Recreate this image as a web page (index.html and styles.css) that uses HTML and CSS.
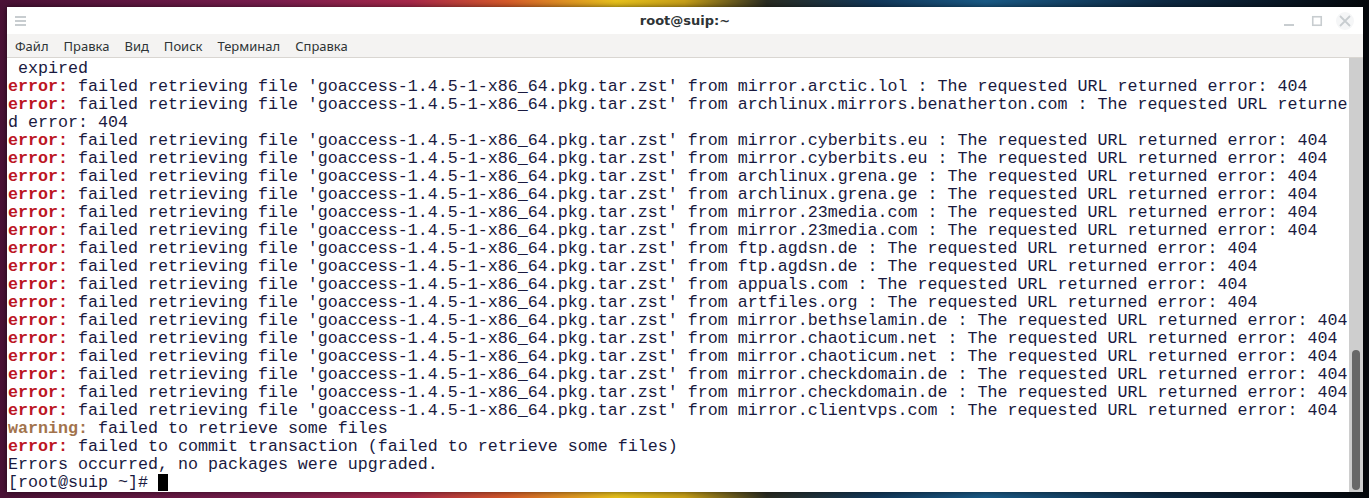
FILE: index.html
```html
<!DOCTYPE html>
<html lang="ru">
<head>
    <meta charset="UTF-8">
    <meta name="viewport" content="width=device-width, initial-scale=1.0">
    <title>root@suip:~</title>
    <link rel="stylesheet" href="styles.css">
</head>
<body>
    <div class="window">
        <div class="titlebar">
            <div class="burger"><span></span><span></span><span></span></div>
            <div class="title">root@suip:~</div>
            <div class="controls">
                <svg width="12" height="12" viewBox="0 0 12 12"><rect x="1" y="9" width="10" height="2" fill="#c8cdd0"/></svg>
                <svg width="12" height="12" viewBox="0 0 12 12"><rect x="1.75" y="1.75" width="8.5" height="8.5" fill="none" stroke="#c8cdd0" stroke-width="1.6"/></svg>
                <span class="close"><svg width="12" height="12" viewBox="0 0 12 12"><path d="M1 1 L11 11 M11 1 L1 11" stroke="#c8cdd0" stroke-width="1.8"/></svg></span>
            </div>
        </div>
        <div class="menubar">
            <span>Файл</span>
            <span>Правка</span>
            <span>Вид</span>
            <span>Поиск</span>
            <span>Терминал</span>
            <span>Справка</span>
        </div>
        <div class="terminal">
            <div class="screen">
                <div class="ln"> expired</div>
                <div class="ln"><b class="err">error:</b> failed retrieving file 'goaccess-1.4.5-1-x86_64.pkg.tar.zst' from mirror.arctic.lol : The requested URL returned error: 404</div>
                <div class="ln"><b class="err">error:</b> failed retrieving file 'goaccess-1.4.5-1-x86_64.pkg.tar.zst' from archlinux.mirrors.benatherton.com : The requested URL returne</div>
                <div class="ln">d error: 404</div>
                <div class="ln"><b class="err">error:</b> failed retrieving file 'goaccess-1.4.5-1-x86_64.pkg.tar.zst' from mirror.cyberbits.eu : The requested URL returned error: 404</div>
                <div class="ln"><b class="err">error:</b> failed retrieving file 'goaccess-1.4.5-1-x86_64.pkg.tar.zst' from mirror.cyberbits.eu : The requested URL returned error: 404</div>
                <div class="ln"><b class="err">error:</b> failed retrieving file 'goaccess-1.4.5-1-x86_64.pkg.tar.zst' from archlinux.grena.ge : The requested URL returned error: 404</div>
                <div class="ln"><b class="err">error:</b> failed retrieving file 'goaccess-1.4.5-1-x86_64.pkg.tar.zst' from archlinux.grena.ge : The requested URL returned error: 404</div>
                <div class="ln"><b class="err">error:</b> failed retrieving file 'goaccess-1.4.5-1-x86_64.pkg.tar.zst' from mirror.23media.com : The requested URL returned error: 404</div>
                <div class="ln"><b class="err">error:</b> failed retrieving file 'goaccess-1.4.5-1-x86_64.pkg.tar.zst' from mirror.23media.com : The requested URL returned error: 404</div>
                <div class="ln"><b class="err">error:</b> failed retrieving file 'goaccess-1.4.5-1-x86_64.pkg.tar.zst' from ftp.agdsn.de : The requested URL returned error: 404</div>
                <div class="ln"><b class="err">error:</b> failed retrieving file 'goaccess-1.4.5-1-x86_64.pkg.tar.zst' from ftp.agdsn.de : The requested URL returned error: 404</div>
                <div class="ln"><b class="err">error:</b> failed retrieving file 'goaccess-1.4.5-1-x86_64.pkg.tar.zst' from appuals.com : The requested URL returned error: 404</div>
                <div class="ln"><b class="err">error:</b> failed retrieving file 'goaccess-1.4.5-1-x86_64.pkg.tar.zst' from artfiles.org : The requested URL returned error: 404</div>
                <div class="ln"><b class="err">error:</b> failed retrieving file 'goaccess-1.4.5-1-x86_64.pkg.tar.zst' from mirror.bethselamin.de : The requested URL returned error: 404</div>
                <div class="ln"><b class="err">error:</b> failed retrieving file 'goaccess-1.4.5-1-x86_64.pkg.tar.zst' from mirror.chaoticum.net : The requested URL returned error: 404</div>
                <div class="ln"><b class="err">error:</b> failed retrieving file 'goaccess-1.4.5-1-x86_64.pkg.tar.zst' from mirror.chaoticum.net : The requested URL returned error: 404</div>
                <div class="ln"><b class="err">error:</b> failed retrieving file 'goaccess-1.4.5-1-x86_64.pkg.tar.zst' from mirror.checkdomain.de : The requested URL returned error: 404</div>
                <div class="ln"><b class="err">error:</b> failed retrieving file 'goaccess-1.4.5-1-x86_64.pkg.tar.zst' from mirror.checkdomain.de : The requested URL returned error: 404</div>
                <div class="ln"><b class="err">error:</b> failed retrieving file 'goaccess-1.4.5-1-x86_64.pkg.tar.zst' from mirror.clientvps.com : The requested URL returned error: 404</div>
                <div class="ln"><b class="warn">warning:</b> failed to retrieve some files</div>
                <div class="ln"><b class="err">error:</b> failed to commit transaction (failed to retrieve some files)</div>
                <div class="ln">Errors occurred, no packages were upgraded.</div>
                <div class="ln">[root@suip ~]# <span class="cursor"></span></div>
            </div>
            <div class="scrollbar"><div class="thumb"></div></div>
        </div>
    </div>
</body>
</html>
```

FILE: styles.css
```css
html, body {
  margin: 0;
  height: 100%;
}

body {
  background:
    linear-gradient(90deg, #4a1236 0%, #7a1e4e 20%, #a8284a 30%, #d65a2a 37%, #e8c21c 45%, #c8a018 50%, #2a2c22 56%, #12385a 64%, #1a5a86 72%, #0e2a44 85%, #05080c 100%);
  overflow: hidden;
}

.window {
  margin: 7px 0 0 7px;
  width: 1356px;
  height: 485px;
  background: #fff;
  display: flex;
  flex-direction: column;
  font-family: "Noto Sans", "DejaVu Sans", sans-serif;
  box-shadow: 0 0 6px rgba(0, 0, 0, 0.6);
}

.titlebar {
  flex-shrink: 0;
  height: 27px;
  display: grid;
  grid-template-columns: 1fr auto 1fr;
  align-items: center;
  background: #fff;
}

.burger {
  display: flex;
  flex-direction: column;
  gap: 2px;
  margin-left: 8px;
  width: 11px;
}

.burger span {
  height: 2px;
  background: #c8cdd0;
}

.title {
  font-family: "DejaVu Sans", sans-serif;
  font-weight: bold;
  font-size: 13px;
  color: #2e3436;
}

.controls {
  justify-self: end;
  display: flex;
  align-items: center;
  gap: 16px;
  margin-right: 9px;
}

.controls svg {
  display: block;
}

.close {
  width: 18px;
  height: 18px;
  border-radius: 50%;
  background: #f5f6f7;
  display: flex;
  align-items: center;
  justify-content: center;
  margin-left: -3px;
}

.menubar {
  flex-shrink: 0;
  height: 23px;
  background: #f4f3f2;
  border-bottom: 1px solid #d9d6d2;
  display: flex;
  align-items: center;
  gap: 15px;
  padding-left: 8px;
  font-size: 13px;
  color: #2e3436;
}

.terminal {
  flex: 1;
  min-height: 0;
  display: flex;
  background: #fff;
  overflow: hidden;
}

.screen {
  flex: 1;
  padding: 2px 0 0 1px;
  font-family: "Liberation Mono", "Courier New", monospace;
  font-size: 16.66px;
  line-height: 18px;
  color: #1a1a40;
  overflow: hidden;
}

.ln {
  height: 18px;
  white-space: pre;
}

.err {
  color: #bc1624;
}

.warn {
  color: #a2734c;
}

.cursor {
  display: inline-block;
  width: 10px;
  height: 17px;
  background: #000;
  vertical-align: -4px;
}

.scrollbar {
  width: 14px;
  background: #cecece;
  display: flex;
  flex-direction: column;
  justify-content: flex-end;
  align-items: center;
  padding-bottom: 2px;
}

.thumb {
  width: 8px;
  height: 140px;
  border-radius: 4px;
  background: #686868;
}
```
